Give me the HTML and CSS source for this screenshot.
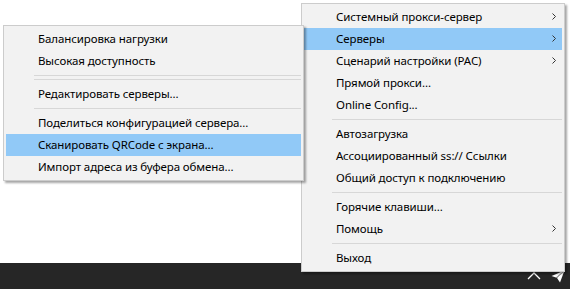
FILE: index.html
```html
<!DOCTYPE html>
<html lang="ru">

<head>
  <meta charset="UTF-8">
  <meta name="viewport" content="width=device-width, initial-scale=1.0">
  <title>Shadowsocks</title>
  <link rel="stylesheet" href="styles.css">
</head>

<body>
  <div class="desktop">

    <div class="menu main-menu">
      <div class="item">Системный прокси-сервер<span class="arrow"></span></div>
      <div class="item active">Серверы<span class="arrow"></span></div>
      <div class="item">Сценарий настройки (PAC)<span class="arrow"></span></div>
      <div class="item">Прямой прокси...</div>
      <div class="item">Online Config...</div>
      <div class="sep"></div>
      <div class="item">Автозагрузка</div>
      <div class="item">Ассоциированный ss:// Ссылки</div>
      <div class="item">Общий доступ к подключению</div>
      <div class="sep"></div>
      <div class="item">Горячие клавиши...</div>
      <div class="item">Помощь<span class="arrow"></span></div>
      <div class="sep"></div>
      <div class="item">Выход</div>
    </div>

    <div class="menu sub-menu">
      <div class="item">Балансировка нагрузки</div>
      <div class="item">Высокая доступность</div>
      <div class="sep"></div>
      <div class="sep"></div>
      <div class="item">Редактировать серверы...</div>
      <div class="sep"></div>
      <div class="item">Поделиться конфигурацией сервера...</div>
      <div class="item active">Сканировать QRCode с экрана...</div>
      <div class="item">Импорт адреса из буфера обмена...</div>
    </div>

  </div>

  <div class="taskbar">
    <svg class="tray-icon" width="14" height="8" viewBox="0 0 14 8">
      <polyline points="1,7 7,1 13,7" fill="none" stroke="#fff" stroke-width="1.3" />
    </svg>
    <svg class="tray-icon" width="14" height="13" viewBox="0 0 14 13">
      <polygon points="13.5,0.5 0.5,6 5,7.5" fill="#fff" />
      <polygon points="13.5,0.5 6,8 9,12.5" fill="#fff" />
      <polygon points="13.5,0.5 5,7.5 6,8" fill="#bbb" />
    </svg>
  </div>
</body>

</html>
```

FILE: styles.css
```css
html,
body {
  margin: 0;
  padding: 0;
}

body {
  width: 570px;
  height: 289px;
  background: #fff;
  font-family: "Noto Sans", "Liberation Sans", sans-serif;
  font-size: 11.5px;
  letter-spacing: -0.1px;
  color: #000;
  overflow: hidden;
}

.desktop {
  position: relative;
  height: 263px;
}

.menu {
  position: absolute;
  box-sizing: border-box;
  background: #f2f2f2;
  border: 1px solid #cccccc;
  padding: 2px;
  box-shadow: 2px 2px 2px rgba(0, 0, 0, 0.35);
}

.main-menu {
  left: 301px;
  top: 3px;
  width: 264px;
  z-index: 1;
}

.sub-menu {
  left: 3px;
  top: 25px;
  width: 301px;
  z-index: 2;
}

.item {
  box-sizing: border-box;
  height: 22px;
  display: flex;
  align-items: center;
  padding: 0 6px 1px 32px;
  white-space: nowrap;
}

.item.active {
  background: #91c9f7;
}

.arrow {
  margin-left: auto;
  width: 4px;
  height: 7px;
  background: no-repeat center / 4px 7px;
  background-image: url("data:image/svg+xml;utf8,<svg xmlns='http://www.w3.org/2000/svg' width='4' height='7' viewBox='0 0 4 7'><polyline points='0.5,0.5 3.5,3.5 0.5,6.5' fill='none' stroke='%23333' stroke-width='1'/></svg>");
}

.sep {
  height: 1px;
  margin: 3px 0 3px 28px;
  background: #d7d7d7;
}

.taskbar {
  height: 26px;
  background: #262626;
  display: flex;
  justify-content: flex-end;
  align-items: center;
  gap: 10px;
  padding-right: 5px;
}

.tray-icon {
  display: block;
}
```
